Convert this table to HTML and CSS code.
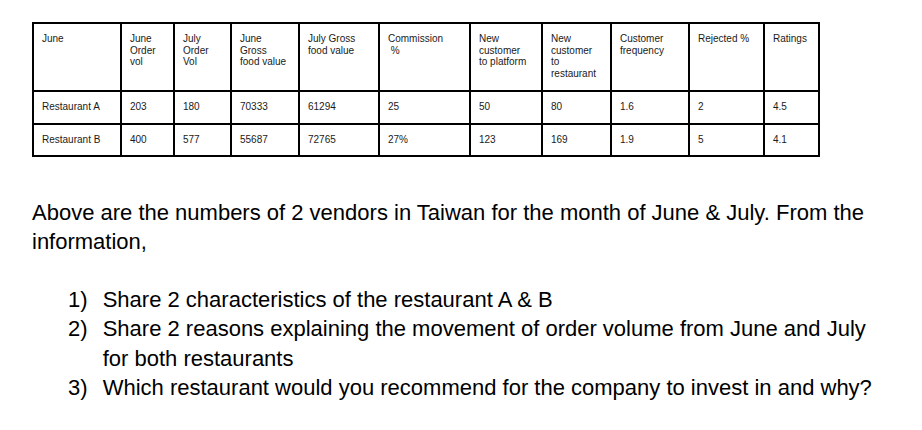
FILE: index.html
```html
<!DOCTYPE html>
<html lang="en">
<head>
<meta charset="utf-8">
<title>Vendors</title>
<link rel="stylesheet" href="styles.css">
</head>
<body>
<main class="page">
  <div class="grid-table" role="table">
    <div class="cell">June</div>
    <div class="cell">June<br>Order<br>vol</div>
    <div class="cell">July<br>Order<br>Vol</div>
    <div class="cell">June<br>Gross<br>food value</div>
    <div class="cell">July Gross<br>food value</div>
    <div class="cell">Commission<br>&nbsp;%</div>
    <div class="cell">New<br>customer<br>to platform</div>
    <div class="cell">New<br>customer<br>to<br>restaurant</div>
    <div class="cell">Customer<br>frequency</div>
    <div class="cell">Rejected %</div>
    <div class="cell">Ratings</div>

    <div class="cell">Restaurant A</div>
    <div class="cell">203</div>
    <div class="cell">180</div>
    <div class="cell">70333</div>
    <div class="cell">61294</div>
    <div class="cell">25</div>
    <div class="cell">50</div>
    <div class="cell">80</div>
    <div class="cell">1.6</div>
    <div class="cell">2</div>
    <div class="cell">4.5</div>

    <div class="cell">Restaurant B</div>
    <div class="cell">400</div>
    <div class="cell">577</div>
    <div class="cell">55687</div>
    <div class="cell">72765</div>
    <div class="cell">27%</div>
    <div class="cell">123</div>
    <div class="cell">169</div>
    <div class="cell">1.9</div>
    <div class="cell">5</div>
    <div class="cell">4.1</div>
  </div>

  <p class="intro">Above are the numbers of 2 vendors in Taiwan for the month of June &amp; July. From the information,</p>

  <ol class="questions">
    <li class="q"><span class="num">1)</span><span class="txt">Share 2 characteristics of the restaurant A &amp; B</span></li>
    <li class="q"><span class="num">2)</span><span class="txt">Share 2 reasons explaining the movement of order volume from June and July for both restaurants</span></li>
    <li class="q"><span class="num">3)</span><span class="txt">Which restaurant would you recommend for the company to invest in and why?</span></li>
  </ol>
</main>
</body>
</html>
```

FILE: styles.css
```css
html, body {
  margin: 0;
  padding: 0;
  background: #ffffff;
}

.page {
  padding: 22px 0 0 32px;
  font-family: "Liberation Sans", Arial, sans-serif;
  color: #000;
}

.grid-table {
  display: grid;
  grid-template-columns: 88px 53px 57px 68px 80px 91px 72px 69px 78px 75px 55px;
  grid-template-rows: 68px 33px 32px;
  width: max-content;
  border-right: 2px solid #000;
  border-bottom: 2px solid #000;
}

.cell {
  box-sizing: border-box;
  border-left: 2px solid #000;
  border-top: 2px solid #000;
  padding: 9px 6px 0 8px;
  font-size: 10px;
  line-height: 11.5px;
  color: #1a1a1a;
  overflow: hidden;
}

.intro {
  margin: 41px 0 0 0;
  width: 853px;
  font-size: 22px;
  line-height: 29.3px;
}

.questions {
  list-style: none;
  margin: 28.5px 0 0 0;
  padding: 0;
  width: 853px;
  font-size: 22px;
  line-height: 29.3px;
}

.q {
  display: flex;
}

.num {
  flex: 0 0 34.7px;
  margin-left: 36px;
}

.txt {
  flex: 1 1 auto;
}
```
